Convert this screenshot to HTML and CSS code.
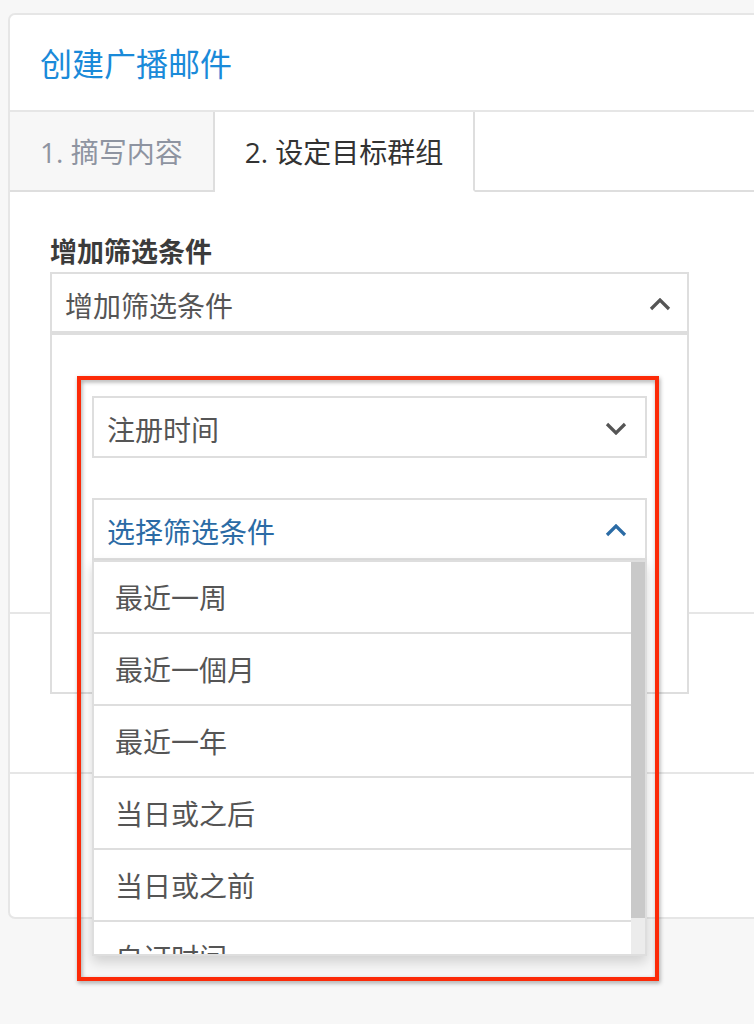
FILE: index.html
```html
<!DOCTYPE html>
<html lang="zh">

<head>
    <meta charset="UTF-8">
    <meta name="viewport" content="width=device-width, initial-scale=1.0">
    <title>创建广播邮件</title>
    <link rel="stylesheet" href="styles.css">
</head>

<body>
    <div class="card">
        <div class="card-header">
            <h1 class="card-title">创建广播邮件</h1>
        </div>

        <ul class="tabs">
            <li class="tab">1. 摘写内容</li>
            <li class="tab active">2. 设定目标群组</li>
            <li class="tab-rest"></li>
        </ul>

        <div class="tab-pane">
            <label class="field-label">增加筛选条件</label>
            <div class="select-wrap">
                <div class="select">
                    <span>增加筛选条件</span>
                    <svg class="chevron" width="22" height="13" viewBox="0 0 22 13"><polyline points="2,11 11,2 20,11" /></svg>
                </div>

                <!-- filter dropdown panel -->
                <div class="filter-panel">
                    <div class="filter-group">
                        <div class="highlight"></div>
                        <div class="select">
                            <span>注册时间</span>
                            <svg class="chevron" width="22" height="13" viewBox="0 0 22 13"><polyline points="2,2 11,11 20,2" /></svg>
                        </div>
                        <div class="select select-open">
                            <span>选择筛选条件</span>
                            <svg class="chevron" width="22" height="13" viewBox="0 0 22 13"><polyline points="2,11 11,2 20,11" /></svg>
                        </div>
                        <div class="options">
                            <ul class="options-list">
                                <li>最近一周</li>
                                <li>最近一個月</li>
                                <li>最近一年</li>
                                <li>当日或之后</li>
                                <li>当日或之前</li>
                                <li>自订时间</li>
                            </ul>
                            <div class="scrollbar">
                                <div class="scrollbar-thumb"></div>
                            </div>
                        </div>
                    </div>
                </div>
            </div>
        </div>

        <div class="card-section"></div>
        <div class="card-footer"></div>
    </div>
</body>

</html>
```

FILE: styles.css
```css
:root {
    --border-color: #dedede;
    --line-color: #e6e6e6;
    --text-color: #555;
    --title-color: #1a8ad9;
    --select-blue: #2b6ba5;
}

* {
    box-sizing: border-box;
    margin: 0;
    padding: 0;
}

html {
    overflow: hidden;
}

body {
    font-family: 'Open Sans', 'Noto Sans CJK SC', sans-serif;
    color: var(--text-color);
    background-color: #f7f7f7;
    min-height: 100vh;
    padding: 13px 0 0 8px;
}

.card {
    width: 800px;
    background-color: white;
    border: 2px solid var(--line-color);
    border-radius: 7px;
}

.card-header {
    height: 97px;
    padding: 0 30px;
    display: flex;
    align-items: center;
    border-bottom: 2px solid var(--line-color);
}

.card-title {
    font-size: 32px;
    font-weight: normal;
    color: var(--title-color);
    line-height: 1;
    padding-top: 2px;
}

.tabs {
    display: flex;
    list-style: none;
    height: 80px;
}

.tab {
    display: flex;
    align-items: center;
    padding: 0 30px;
    font-size: 28px;
    color: #8e94a1;
    background-color: #f7f7f7;
    border-right: 2px solid var(--border-color);
    border-bottom: 2px solid var(--border-color);
}

.tab.active {
    color: #333;
    background-color: white;
    border-bottom-color: transparent;
}

.tab-rest {
    flex: 1;
    border-bottom: 2px solid var(--border-color);
}

.tab-pane {
    height: 420px;
    padding: 40px 40px 0;
}

.field-label {
    display: block;
    font-size: 27px;
    font-weight: bold;
    color: #3b3b3b;
    line-height: 40px;
}

.select-wrap {
    position: relative;
    width: 639px;
}

.select {
    display: flex;
    align-items: center;
    justify-content: space-between;
    height: 61px;
    padding: 4px 16px 0 13px;
    font-size: 28px;
    border: 2px solid var(--border-color);
    background-color: white;
}

.chevron {
    fill: none;
    stroke: #555;
    stroke-width: 3.2;
}

.filter-panel {
    position: absolute;
    top: 100%;
    left: 0;
    right: 0;
    height: 361px;
    padding: 61px 40px 0;
    background-color: white;
    border: 2px solid var(--border-color);
    z-index: 10;
}

.filter-group {
    position: relative;
}

.filter-group .select {
    height: 62px;
    padding: 3px 18px 0 13px;
}

.filter-group .select + .select {
    margin-top: 40px;
}

.select-open {
    color: var(--select-blue);
}

.select-open .chevron {
    stroke: var(--select-blue);
}

.options {
    display: flex;
    height: 396px;
    border: 2px solid var(--border-color);
    background-color: white;
    box-shadow: 0 6px 12px rgba(0, 0, 0, 0.16);
}

.options-list {
    flex: 1;
    list-style: none;
    overflow: hidden;
}

.options-list li {
    height: 72px;
    display: flex;
    align-items: center;
    padding-left: 21px;
    font-size: 28px;
    border-bottom: 2px solid var(--border-color);
}

.scrollbar {
    width: 14px;
    background-color: #ececec;
}

.scrollbar-thumb {
    height: 356px;
    background-color: #c9c9c9;
}

/* red annotation frame around the filter group */
.highlight {
    position: absolute;
    top: -20px;
    left: -15px;
    right: -12px;
    bottom: -25px;
    border: 4px solid #fc2a08;
    filter: drop-shadow(1px 2px 2px rgba(0, 0, 0, 0.35));
    pointer-events: none;
    z-index: 2;
}

.card-section {
    height: 160px;
    border-top: 2px solid var(--line-color);
}

.card-footer {
    height: 145px;
    border-top: 2px solid var(--line-color);
}
```
